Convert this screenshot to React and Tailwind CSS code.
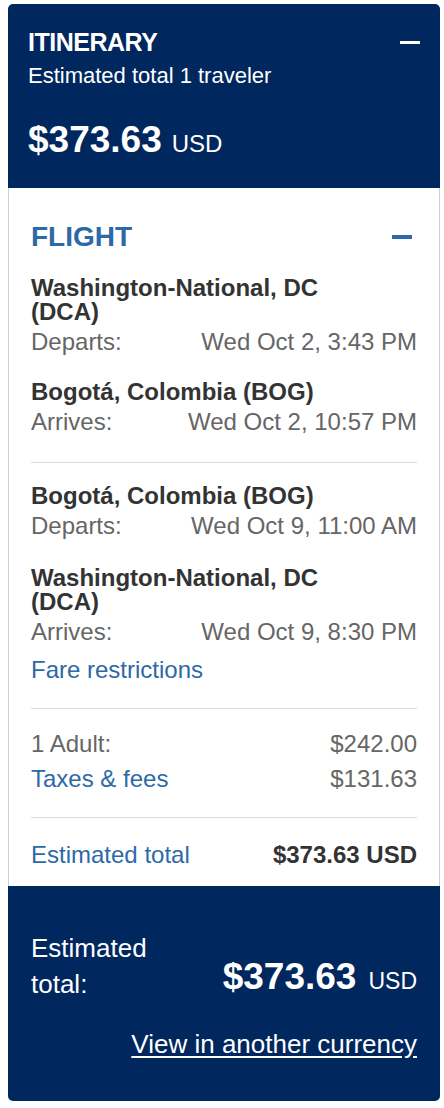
export default function App() {
  const font = { fontFamily: '"Liberation Sans", Arial, Helvetica, sans-serif' };

  const Segment = ({ city, label, time, className = "" }) => (
    <div className={className}>
      <div className="text-[24px] leading-[24px] font-bold text-[#333333]">{city}</div>
      <div className="mt-[3px] flex justify-between text-[24px] leading-[30px] text-[#666666]">
        <span>{label}</span>
        <span>{time}</span>
      </div>
    </div>
  );

  return (
    <div className="min-h-screen bg-white pl-[8px] pr-[4px] pt-[4px] pb-[8px]" style={font}>
      <div className="w-[432px] overflow-hidden rounded-[5px]">
        {/* header */}
        <div className="bg-[#00275e] px-[20px] pt-[24px] pb-[24px] text-white">
          <div className="flex items-center justify-between">
            <h1 className="text-[25px] leading-[28px] font-bold tracking-[-0.5px]">ITINERARY</h1>
            <span className="block h-[3px] w-[20px] bg-white" />
          </div>
          <div className="mt-[6px] text-[22px] leading-[28px]">Estimated total 1 traveler</div>
          <div className="mt-[30px] flex items-baseline leading-[40px]">
            <span className="text-[37px] font-bold">$373.63</span>
            <span className="ml-[10px] text-[24px]">USD</span>
          </div>
        </div>

        {/* flight details */}
        <div className="border-x border-[#cfcfcf] bg-white px-[22px] pt-[33px] pb-[16px]">
          <div className="flex items-center justify-between">
            <h2 className="text-[28px] leading-[32px] font-bold text-[#2c69a7]">FLIGHT</h2>
            <span className="mr-[5px] block h-[4px] w-[20px] bg-[#2c69a7]" />
          </div>

          <Segment
            className="mt-[23px]"
            city={<>Washington-National, DC<br />(DCA)</>}
            label="Departs:"
            time="Wed Oct 2, 3:43 PM"
          />
          <Segment
            className="mt-[23px]"
            city="Bogotá, Colombia (BOG)"
            label="Arrives:"
            time="Wed Oct 2, 10:57 PM"
          />

          <div className="mt-[25px] h-px bg-[#dcdcdc]" />

          <Segment
            className="mt-[21px]"
            city="Bogotá, Colombia (BOG)"
            label="Departs:"
            time="Wed Oct 9, 11:00 AM"
          />
          <Segment
            className="mt-[25px]"
            city={<>Washington-National, DC<br />(DCA)</>}
            label="Arrives:"
            time="Wed Oct 9, 8:30 PM"
          />

          <a href="#" className="mt-[8px] block text-[24px] leading-[30px] text-[#2c69a7]">
            Fare restrictions
          </a>

          <div className="mt-[23px] h-px bg-[#dcdcdc]" />

          <div className="mt-[17px] text-[24px] leading-[35px]">
            <div className="flex justify-between text-[#666666]">
              <span>1 Adult:</span>
              <span>$242.00</span>
            </div>
            <div className="flex justify-between">
              <a href="#" className="text-[#2c69a7]">Taxes &amp; fees</a>
              <span className="text-[#666666]">$131.63</span>
            </div>
          </div>

          <div className="mt-[21px] h-px bg-[#dcdcdc]" />

          <div className="mt-[22px] flex justify-between text-[24px] leading-[30px]">
            <a href="#" className="text-[#2c69a7]">Estimated total</a>
            <span className="font-bold text-[#333333]">$373.63 USD</span>
          </div>
        </div>

        {/* footer */}
        <div className="bg-[#00275e] px-[23px] pt-[44px] pb-[41px] text-white">
          <div className="flex items-start justify-between">
            <div className="text-[26px] leading-[36px]">
              Estimated
              <br />
              total:
            </div>
            <div className="mt-[27px] flex items-baseline leading-[40px]">
              <span className="text-[37px] font-bold">$373.63</span>
              <span className="ml-[12px] text-[23px]">USD</span>
            </div>
          </div>
          <div className="mt-[27px] text-right">
            <a href="#" className="text-[26px] leading-[30px] underline underline-offset-[3px]">
              View in another currency
            </a>
          </div>
        </div>
      </div>
    </div>
  );
}
